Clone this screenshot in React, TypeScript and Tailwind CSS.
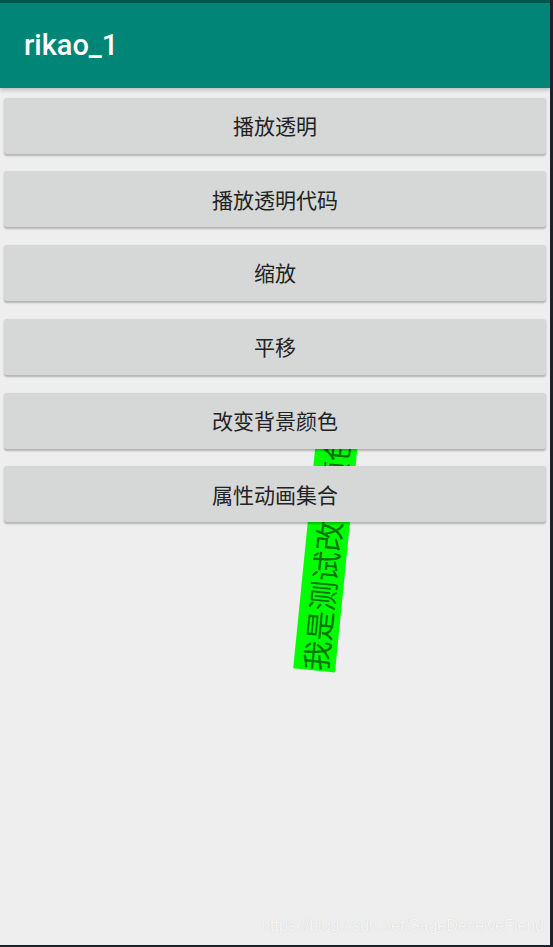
import React from "react";

const buttons = ["播放透明", "播放透明代码", "缩放", "平移", "改变背景颜色", "属性动画集合"];

const cjk = { fontFamily: '"Noto Sans CJK SC", "Noto Sans", sans-serif' };

export default function App() {
    return (
        <div className="w-[553px] h-[947px] bg-[#1b222b] pr-[3px] pb-[2px]">
            <div className="relative flex h-full flex-col overflow-hidden bg-[#eeeeee]">
                {/* status strip + toolbar */}
                <div className="relative z-20 h-[3px] bg-[#00574b]" />
                <div
                    className="relative z-20 flex h-[85px] items-center bg-[#008577] pl-[24px] shadow-[0_2px_4px_rgba(0,0,0,0.22)]"
                    style={{ fontFamily: "Roboto, sans-serif" }}
                >
                    <span className="text-[29px] font-medium text-white">rikao_1</span>
                </div>

                <div className="flex flex-col gap-[17.75px] px-[4px] pt-[9.5px]">
                    {buttons.map((label) => (
                        <button
                            key={label}
                            className="relative z-10 flex h-[56px] items-center justify-center rounded-[3px] bg-[#d6d7d7] text-[21px] text-[#222222] shadow-[0_1.5px_2px_rgba(0,0,0,0.25)]"
                            style={cjk}
                        >
                            {label}
                        </button>
                    ))}
                </div>

                {/* rotated text view, sits behind the buttons */}
                <div
                    className="absolute left-[206px] top-[530px] z-0 flex h-[42px] w-[240px] -rotate-[84.3deg] items-center whitespace-nowrap bg-[#00ff00] text-[30px] leading-[42px] text-[#007500]"
                    style={cjk}
                >
                    我是测试改变颜色
                </div>

                {/* watermark */}
                <div
                    className="absolute bottom-[7px] right-[6px] text-[16px] text-white/85 [text-shadow:0_0_1px_rgba(0,0,0,0.2)]"
                    style={{ fontFamily: '"Liberation Sans", Arial, sans-serif' }}
                >
                    https://blog.csdn.net/SageDeceiveFiend
                </div>
            </div>
        </div>
    );
}
